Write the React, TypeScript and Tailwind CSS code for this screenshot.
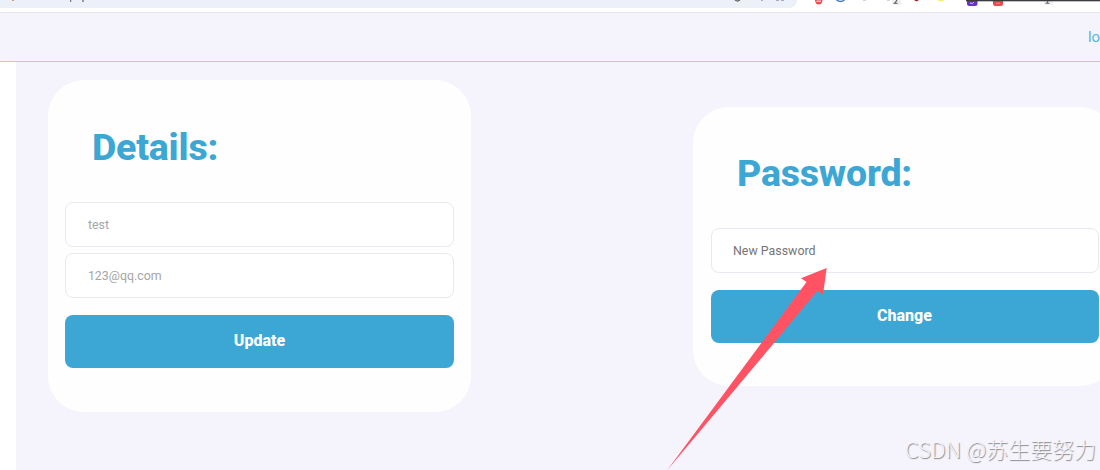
interface FieldProps {
  value?: string;
  placeholder?: string;
}

function Field({ value, placeholder }: FieldProps) {
  return (
    <input
      disabled={value !== undefined}
      defaultValue={value}
      placeholder={placeholder}
      className="block w-full h-[44.500px] rounded-lg border border-[#e9e9f1] bg-white px-[21.500px] text-[12.400px] text-[#a6a6a6] placeholder-[#757575] focus:outline-none"
    />
  );
}

function SubmitButton({ label }: { label: string }) {
  return (
    <button className="block w-full h-[52.500px] rounded-lg bg-[#3ca7d5] text-base font-extrabold text-white">
      {label}
    </button>
  );
}

function BrowserStrip() {
  return (
    <div className="relative h-[13px] shrink-0 overflow-hidden border-b border-[#e4e4ea] bg-white">
      <div className="h-2 w-[797px] rounded-br-[10px] bg-[#ebf0f9]" />
      {/* lower edges of the address bar and extension icons */}
      <svg className="absolute left-0 top-0" width="1100" height="12" viewBox="0 0 1100 12">
        <rect x="12" y="0" width="2" height="1" fill="#c99c80" />
        <rect x="70" y="0" width="1.2" height="2" fill="#777" />
        <rect x="82" y="0" width="2" height="2" fill="#999" />
        <path d="M735 0q2.5 2 5 0" fill="none" stroke="#666" strokeWidth="1.3" />
        <path d="M761 0h2M776 0h3M781 0h3" stroke="#999" strokeWidth="1.5" />
        <path d="M815 0h7.500a3.700 4.500 0 0 1-7.500 0z" fill="#f5484b" />
        <path d="M816.500 1.200h4.500" stroke="#fff" />
        <path d="M836.500 0q4 3 8 0" fill="none" stroke="#4b7fc0" strokeWidth="1.500" />
        <path d="M863 0h3M887 0h3" stroke="#aaa" />
        <rect x="892" y="0" width="9" height="5" rx="1.500" fill="#eeeeee" />
        <path d="M893.500 3.300h4M897 0l-2 3" stroke="#555" strokeWidth="1.100" />
        <path d="M914 0h5l-2.500 1.500z" fill="#a3161b" />
        <path d="M937.500 0h7l-2 1.200h-3z" fill="#f8ec62" />
        <rect x="967" y="-4" width="10.500" height="10" rx="2.500" fill="#6934bd" />
        <path d="M970 3q2.500 1.500 4-1" fill="none" stroke="#d9c6f5" strokeWidth="1" />
        <rect x="993" y="-4" width="10" height="10" rx="2.500" fill="#e74b4b" />
        <path d="M996 3.200h4" stroke="#f58684" />
        <rect x="1044" y="0" width="9" height="5" rx="1.500" fill="#f1f1f1" />
        <path d="M1045.500 3.300h4M1048 1l-1 2" stroke="#666" strokeWidth="1.100" />
        <rect x="966" y="0" width="134" height="1.300" fill="#3b3b3f" />
      </svg>
    </div>
  );
}

export default function App() {
  return (
    <div className="relative flex h-[470px] w-[1100px] flex-col overflow-hidden bg-[#f5f4fd] font-['Roboto',sans-serif]">
      <BrowserStrip />

      <header className="flex h-[49px] shrink-0 items-center justify-end overflow-hidden border-b border-[#a5d1ea]">
        <a className="text-[15px] tracking-[-0.1px] text-[#5db4db]">lo</a>
      </header>

      <main className="flex min-h-0 flex-1">
        <div className="w-4 shrink-0 bg-white" />

        <div className="flex items-start pl-8">
          <section className="mt-[18px] h-[331.500px] w-[423px] shrink-0 rounded-[36px] bg-[#fefefe] px-[17.400px]">
            <h1 className="pl-[26.500px] pt-[42px] text-[37.500px] font-extrabold leading-[50px] tracking-[-0.180px] text-[#3ca7d5]">
              Details:
            </h1>
            <div className="mt-[30px] space-y-[6.500px]">
              <Field value="test" />
              <Field value="123@qq.com" />
            </div>
            <div className="mt-[17.500px]">
              <SubmitButton label="Update" />
            </div>
          </section>

          <section className="ml-[222px] mt-[45px] h-[278.500px] w-[423px] shrink-0 rounded-[36px] bg-[#fefefe] px-[17.500px]">
            <h1 className="pl-[26.500px] pt-[40.500px] text-[37.500px] font-extrabold leading-[50px] tracking-[-0.180px] text-[#3ca7d5]">
              Password:
            </h1>
            <div className="mt-[30.500px]">
              <Field placeholder="New Password" />
            </div>
            <div className="mt-[17.500px]">
              <SubmitButton label="Change" />
            </div>
          </section>
        </div>
      </main>

      {/* pointer to the password field */}
      <svg className="pointer-events-none absolute left-0 top-0" width="1100" height="470" viewBox="0 0 1100 470">
        <path d="M667 470.500L806.500 282L801 278.300L826.700 268L823 294.500L817.300 291L774 343Z" fill="#ff5364" />
      </svg>

      <div className="absolute bottom-1.5 right-1 whitespace-nowrap font-['Noto_Sans_CJK_SC',sans-serif] text-[22px] font-light leading-8 text-[#f4f4f8] [text-shadow:1px_1px_1px_#888]">
        CSDN @苏生要努力
      </div>
    </div>
  );
}
